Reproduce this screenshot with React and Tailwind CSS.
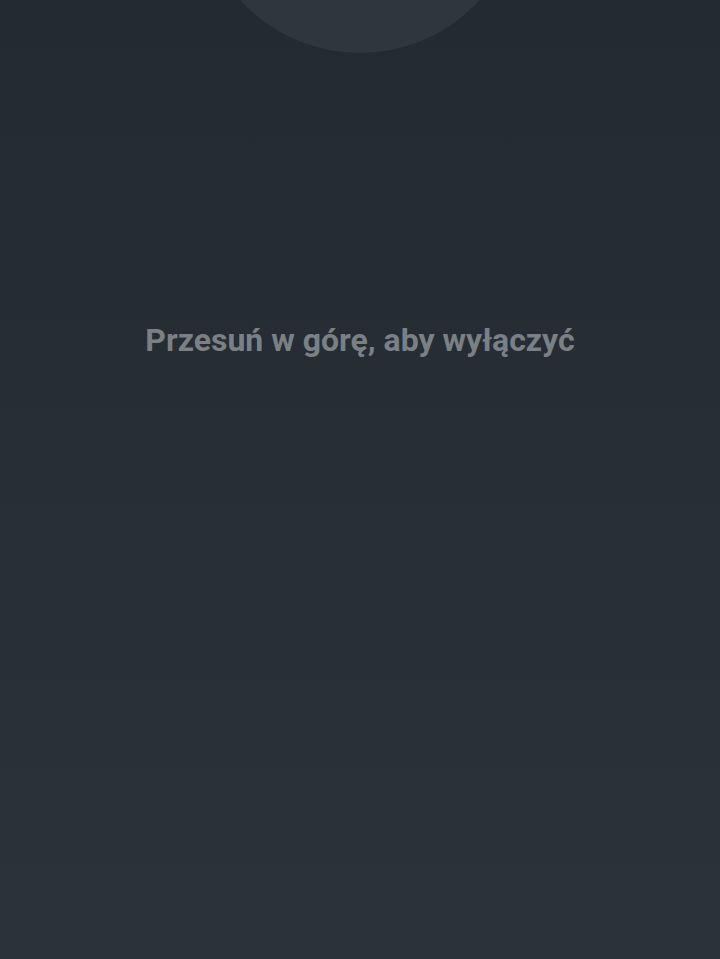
export default function App() {
  return (
    <div className="relative w-[720px] h-[959px] overflow-hidden bg-gradient-to-b from-[#232a30] to-[#2b323a]">
      <div className="absolute left-[198px] top-[-271px] w-[324px] h-[324px] rounded-full bg-[#2e363e]" />
      <div className="relative flex justify-center pt-[318px]">
        <p className="text-[32px] leading-[44px] font-bold text-[#7b8085] font-['Roboto',sans-serif]">
          Przesuń w górę, aby wyłączyć
        </p>
      </div>
    </div>
  );
}
